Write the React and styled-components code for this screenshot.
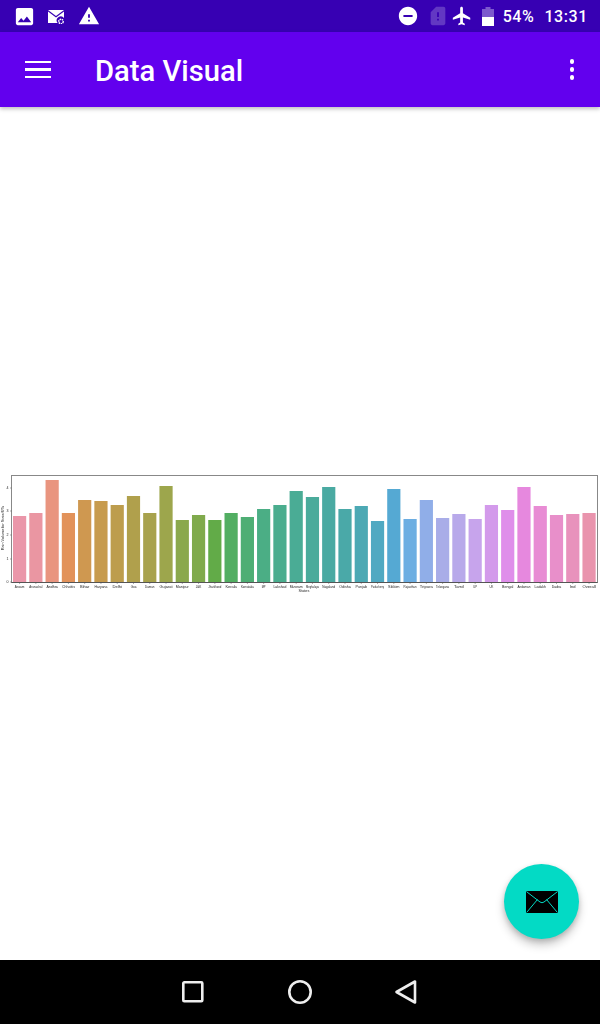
import styled, { createGlobalStyle } from 'styled-components'

const GlobalStyle = createGlobalStyle`
html,body{
  margin:0;
  padding:0;
  background:#fff;
}
`
const Screen = styled.div`
  width:600px;
  height:1024px;
  display:flex;
  flex-direction:column;
  overflow:hidden;
  font-family:Roboto,"Liberation Sans",sans-serif;
`
const StatusBar = styled.div`
  height:32px;
  flex:none;
  display:flex;
  align-items:center;
  padding:0 12px 0 13px;
  background:#3700b3;
  color:#fff;
`
const StatusRight = styled.div`
  margin-left:auto;
  display:flex;
  align-items:center;
`
const Icon = styled.svg`
  flex:none;
  display:block;
  width:${p => p.$w}px;
  height:${p => p.$h || p.$w}px;
  margin-left:${p => p.$ml || 0}px;
  fill:${p => p.$dim ? 'rgba(255,255,255,.22)' : '#fff'};
`
const StatusText = styled.span`
  margin-left:${p => p.$ml}px;
  padding-top:1px;
  font-size:16px;
  font-weight:500;
  letter-spacing:.6px;
  line-height:31px;
`
const AppBar = styled.header`
  position:relative;
  z-index:1;
  height:75px;
  flex:none;
  display:flex;
  align-items:center;
  padding:0 16px 0 25px;
  background:#6200ee;
  color:#fff;
  box-shadow:0 2px 4px rgba(0,0,0,.25);
`
const MenuIcon = styled.div`
  width:26px;
  display:flex;
  flex-direction:column;
  gap:5px;
  span{
    height:2.5px;
    background:#fff;
  }
`
const Title = styled.h1`
  margin:0 0 0 44px;
  padding-top:3px;
  font-size:29.2px;
  font-weight:500;
  line-height:72px;
`
const Dots = styled.div`
  margin-left:auto;
  margin-right:10px;
  display:flex;
  flex-direction:column;
  gap:3.5px;
  i{
    width:4.5px;
    height:4.5px;
    border-radius:50%;
    background:#fff;
  }
`
const Content = styled.main`
  position:relative;
  flex:1;
  display:flex;
  align-items:center;
  background:#fff;
`
const ChartSvg = styled.svg`
  display:block;
  width:600px;
  height:151px;
  filter:blur(.3px);
  text{
    font-family:"Liberation Sans",sans-serif;
    fill:#222;
  }
`
const Fab = styled.button`
  position:absolute;
  right:21px;
  bottom:21px;
  width:75px;
  height:75px;
  padding:0;
  border:none;
  border-radius:50%;
  display:flex;
  align-items:center;
  justify-content:center;
  background:#03dac5;
  box-shadow:0 6px 10px rgba(0,0,0,.22),0 2px 5px rgba(0,0,0,.14);
`
const NavBar = styled.nav`
  height:64px;
  flex:none;
  display:flex;
  align-items:center;
  padding-left:181px;
  background:#000;
`
const NavIcon = styled.svg`
  display:block;
  width:24px;
  height:26px;
  margin-left:${p => p.$ml || 0}px;
  fill:none;
  stroke:#eee;
  stroke-width:2.6;
  stroke-linejoin:round;
`

const bars = [
  ['Assam', 516], ['Arunachal', 513], ['Andhra', 480], ['Chhattis', 513],
  ['Bihar', 500], ['Haryana', 501], ['Delhi', 505], ['Goa', 496],
  ['Daman', 513], ['Gujarat', 486], ['Manipur', 520], ['J&K', 515],
  ['Jharkhand', 520], ['Kerala', 513], ['Karnataka', 517], ['MP', 509],
  ['Lakshad', 505], ['Mizoram', 491], ['Meghalaya', 497], ['Nagaland', 487],
  ['Odisha', 509], ['Punjab', 506], ['Puducherry', 521], ['Sikkim', 489],
  ['Rajasthan', 519], ['Tripura', 500], ['Telangana', 518], ['Tamil', 514],
  ['UP', 519], ['UK', 505], ['Bengal', 510], ['Andaman', 487],
  ['Ladakh', 506], ['Dadra', 515], ['Ind', 514], ['Overall', 513],
]
const colors = ['#ea96a9', '#ea96a2', '#e9957f', '#e2925a', '#cf9850', '#c79b4e', '#bd9d4d', '#b0a04c',
  '#a8a24c', '#9da64c', '#8aa84c', '#80aa4c', '#62ab48', '#52ae62', '#4eae74', '#4bae85',
  '#4aad8e', '#4aac95', '#4aab9b', '#4aaaa2', '#4aa9a8', '#4ca9b4', '#50a9c2', '#55a9d3',
  '#6caee2', '#90aee8', '#a9ade8', '#b8a9ea', '#c7a4ec', '#d39aeb', '#df8eea', '#e688de',
  '#e88cd4', '#e88fca', '#e892bc', '#e994ad']
const baseY = 582

const BarChart = () => (
  <ChartSvg viewBox="0 458 600 151">
    <rect x="11.5" y="475.5" width="586" height="107" fill="#fff" stroke="#888" strokeWidth="1" />
    <line x1="11.5" x2="597.5" y1="582.5" y2="582.5" stroke="#555" />
    {[[582, '0'], [559, '1'], [535, '2'], [511, '3'], [488, '4']].map(([y, t]) => (
      <g key={t}>
        <line x1="10" x2="11.5" y1={y} y2={y} stroke="#555" strokeWidth=".5" />
        <text x="8.5" y={y + 1.2} fontSize="3.6" textAnchor="end">{t}</text>
      </g>
    ))}
    <text fontSize="3.8" textAnchor="middle" transform="translate(4 528) rotate(-90)">Rain Volume for State/UTs</text>
    {bars.map(([name, top], i) => {
      const x = 13 + i * 16.27
      return (
        <g key={name}>
          <rect x={x} y={top} width="13.2" height={baseY - top} fill={colors[i]} />
          <line x1={x + 6.6} x2={x + 6.6} y1="582.5" y2="584" stroke="#555" strokeWidth=".5" />
          <text x={x + 6.6} y="587.5" fontSize="3.6" textAnchor="middle" textLength={Math.min(name.length * 1.9, 13)} lengthAdjust="spacingAndGlyphs">{name}</text>
        </g>
      )
    })}
    <text x="304" y="592" fontSize="3.8" textAnchor="middle">States</text>
  </ChartSvg>
)

export default function App() {
  return (
    <Screen>
      <GlobalStyle />
      <StatusBar>
        <Icon $w={23} viewBox="0 0 24 24">
          <path d="M21 19V5c0-1.1-.9-2-2-2H5c-1.1 0-2 .9-2 2v14c0 1.1.9 2 2 2h14c1.1 0 2-.9 2-2zM8.5 13.5l2.5 3.01L14.5 12l4.5 6H5l3.5-4.5z" />
        </Icon>
        <Icon $w={17} $h={15} $ml={12} viewBox="0 -1 17 15">
          <path d="M0 0h16L8 6z" />
          <path d="M0 1.6v11.4h9.6a4 4 0 0 1 6.4-5V1.6L8 7.6z" />
          <circle cx="13" cy="11.5" r="2.2" fill="none" stroke="#fff" strokeWidth="1.5" strokeDasharray="1.4 .6" />
        </Icon>
        <Icon $w={22} $ml={13} viewBox="0 0 24 24">
          <path d="M1 21h22L12 2 1 21zm12-3h-2v-2h2v2zm0-4h-2v-4h2v4z" />
        </Icon>
        <StatusRight>
          <Icon $w={22} viewBox="0 0 24 24">
            <path d="M12 2C6.48 2 2 6.48 2 12s4.48 10 10 10 10-4.48 10-10S17.52 2 12 2zm5 11H7v-2h10v2z" />
          </Icon>
          <Icon $w={22} $ml={8.5} $dim viewBox="0 0 24 24">
            <path d="M18 2h-8L4.02 8 4 20c0 1.1.9 2 2 2h12c1.1 0 2-.9 2-2V4c0-1.1-.9-2-2-2zm-5 15h-2v-2h2v2zm0-4h-2V8h2v5z" />
          </Icon>
          <Icon $w={22} $ml={1.5} viewBox="0 0 24 24">
            <path d="M21 16v-2l-8-5V3.5c0-.83-.67-1.5-1.5-1.5S10 2.67 10 3.5V9l-8 5v2l8-2.5V19l-2 1.5V22l3.5-1 3.5 1v-1.5L13 19v-5.5l8 2.5z" />
          </Icon>
          <Icon $w={12} $h={19} $ml={9} viewBox="0 0 12 19">
            <path d="M3.5 0h5v2H12v8H0V2h3.5z" fill="rgba(255,255,255,.35)" />
            <path d="M0 10h12v9H0z" />
          </Icon>
          <StatusText $ml={9}>54%</StatusText>
          <StatusText $ml={10}>13:31</StatusText>
        </StatusRight>
      </StatusBar>
      <AppBar>
        <MenuIcon><span /><span /><span /></MenuIcon>
        <Title>Data Visual</Title>
        <Dots><i /><i /><i /></Dots>
      </AppBar>
      <Content>
        <BarChart />
        <Fab>
          <svg width="32" height="22" viewBox="0 0 32 22">
            <rect width="32" height="22" rx="1.5" fill="#000" />
            <path d="M1 1l13 10q2 1.5 4 0L31 1M1 21l10.5-12.5M31 21L20.5 8.5" fill="none" stroke="#03dac5" strokeWidth="1" />
          </svg>
        </Fab>
      </Content>
      <NavBar>
        <NavIcon viewBox="0 0 24 26">
          <rect x="2.3" y="3.3" width="19" height="19" rx="1" />
        </NavIcon>
        <NavIcon $ml={82.5} viewBox="0 0 24 26">
          <circle cx="12" cy="13" r="10.7" />
        </NavIcon>
        <NavIcon $ml={82} viewBox="0 0 24 26">
          <path d="M2.5 13L21 2.5v21z" />
        </NavIcon>
      </NavBar>
    </Screen>
  )
}
